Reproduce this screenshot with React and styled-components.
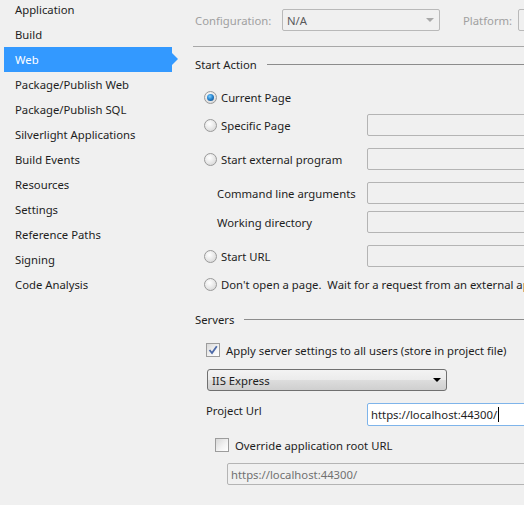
import React from "react";
import styled, { createGlobalStyle } from "styled-components";

const navItems = [
  "Application",
  "Build",
  "Web",
  "Package/Publish Web",
  "Package/Publish SQL",
  "Silverlight Applications",
  "Build Events",
  "Resources",
  "Settings",
  "Reference Paths",
  "Signing",
  "Code Analysis",
];

const GlobalStyle = createGlobalStyle`
  html, body {
    margin: 0;
    padding: 0;
    background: #f0f0f0;
    overflow: hidden;
  }
  body {
    font-family: "Noto Sans", "Open Sans", sans-serif;
    font-size: 11.3px;
    color: #1e1e1e;
  }
`;

const Page = styled.div`
  display: flex;
  width: 524px;
  height: 505px;
  overflow: hidden;
  background: #f0f0f0;
`;

const Sidebar = styled.ul`
  list-style: none;
  margin: -3px 0 0 0;
  padding: 0;
  width: 185px;
  flex-shrink: 0;
`;

const NavItem = styled.li`
  position: relative;
  height: 25px;
  line-height: 25px;
  margin-left: 4px;
  width: 168px;
  padding-left: 11px;
  box-sizing: border-box;
  white-space: nowrap;
  background: ${(p) => (p.$active ? "#3399ff" : "transparent")};
  color: ${(p) => (p.$active ? "#ffffff" : "#1e1e1e")};

  &::after {
    content: "";
    display: ${(p) => (p.$active ? "block" : "none")};
    position: absolute;
    right: -6px;
    top: 6px;
    border-top: 6px solid transparent;
    border-bottom: 6px solid transparent;
    border-left: 6px solid #3399ff;
  }
`;

const Content = styled.div`
  flex-shrink: 0;
  width: 420px;
  display: flex;
  flex-direction: column;
`;

const TopBar = styled.div`
  display: flex;
  align-items: center;
  height: 22px;
  margin-top: 9px;
  padding-left: 10px;
`;

const DimLabel = styled.span`
  color: #a0a0a0;
  width: ${(p) => p.$w}px;
  margin-left: ${(p) => p.$ml || 0}px;
  flex-shrink: 0;
`;

const Combo = styled.div`
  display: flex;
  align-items: center;
  justify-content: space-between;
  box-sizing: border-box;
  width: ${(p) => p.$w}px;
  height: 22px;
  border: 1px solid #b9b9b9;
  border-radius: 2px;
  padding: 0 5px 0 4px;
  color: #5a5a5a;
  flex-shrink: 0;
`;

const SmallArrow = styled.span`
  width: 0;
  height: 0;
  border-left: 4px solid transparent;
  border-right: 4px solid transparent;
  border-top: 4px solid ${(p) => p.$color || "#a8a8a8"};
`;

const Rule = styled.div`
  height: 1px;
  margin: 15px 0 0 8px;
  background: #a8a8a8;
`;

const SectionHead = styled.div`
  display: flex;
  align-items: center;
  height: 22px;
  margin-top: ${(p) => p.$mt}px;
  padding-left: 10px;

  &::after {
    content: "";
    flex: 1;
    height: 1px;
    margin-left: 10px;
    background: #8c8c8c;
  }
`;

const Row = styled.div`
  display: flex;
  align-items: ${(p) => p.$align || "center"};
  height: ${(p) => p.$h || 22}px;
  margin-top: ${(p) => p.$mt}px;
  padding-left: ${(p) => p.$pl}px;
  white-space: nowrap;
`;

const Label = styled.span`
  width: ${(p) => (p.$w ? `${p.$w}px` : "auto")};
  flex-shrink: 0;
  padding-top: ${(p) => p.$pt || 0}px;
`;

const RadioCircle = styled.span`
  width: 13px;
  height: 13px;
  box-sizing: border-box;
  border-radius: 50%;
  border: 1px solid #9a9a9a;
  background: radial-gradient(circle at 40% 35%, #ffffff 0%, #e6e6e6 55%, #cfcfcf 100%);
  display: flex;
  align-items: center;
  justify-content: center;
  margin-right: 4px;
  flex-shrink: 0;

  &::after {
    content: "";
    display: ${(p) => (p.$checked ? "block" : "none")};
    width: 7px;
    height: 7px;
    border-radius: 50%;
    background: radial-gradient(circle at 40% 35%, #7fd0ff 0%, #2a86d0 45%, #0d3f75 100%);
  }
`;

const Radio = ({ checked, children, w }) => (
  <>
    <RadioCircle $checked={checked} />
    <Label $w={w}>{children}</Label>
  </>
);

const Box = styled.span`
  display: inline-flex;
  width: 14px;
  height: 14px;
  box-sizing: border-box;
  border: 1px solid #9c9c9c;
  background: linear-gradient(135deg, #d8d8d8 0%, #f4f4f4 60%, #ffffff 100%);
  margin-right: 6px;
  flex-shrink: 0;
  align-items: center;
  justify-content: center;
`;

const Check = ({ checked, children }) => (
  <>
    <Box>
      {checked && (
        <svg width="10" height="10" viewBox="0 0 10 10">
          <path d="M1.5 5 L4 8 L8.8 1.2" fill="none" stroke="#4d6aa8" strokeWidth="1.8" />
        </svg>
      )}
    </Box>
    <Label>{children}</Label>
  </>
);

const Field = styled.div`
  box-sizing: border-box;
  width: ${(p) => p.$w || 180}px;
  height: ${(p) => p.$h || 22}px;
  flex-shrink: 0;
  display: flex;
  align-items: center;
  padding-left: 3px;
  border: 1px solid ${(p) => (p.$focus ? "#7eb4ea" : "#b4b4b4")};
  border-radius: 2px;
  background: ${(p) => (p.$focus ? "#ffffff" : "#f0f0f0")};
  color: ${(p) => (p.$muted ? "#707070" : "#1e1e1e")};
`;

const Caret = styled.span`
  width: 1px;
  height: 15px;
  background: #000;
  margin-left: 1px;
`;

const Dropdown = styled.div`
  box-sizing: border-box;
  width: 240px;
  height: 22px;
  display: flex;
  align-items: center;
  justify-content: space-between;
  padding: 0 5px 0 4px;
  border: 1px solid #707070;
  border-radius: 3px;
  background: linear-gradient(#f3f3f3 0%, #ebebeb 50%, #dddddd 51%, #cfcfcf 100%);
`;

export default function App() {
  return (
    <>
      <GlobalStyle />
      <Page>
        <Sidebar>
          {navItems.map((name) => (
            <NavItem key={name} $active={name === "Web"}>
              {name}
            </NavItem>
          ))}
        </Sidebar>
        <Content>
          <TopBar>
            <DimLabel $w={87}>Configuration:</DimLabel>
            <Combo $w={158}>
              N/A
              <SmallArrow />
            </Combo>
            <DimLabel $w={55} $ml={23}>Platform:</DimLabel>
            <Combo $w={60} />
          </TopBar>
          <Rule />

          <SectionHead $mt={6}>Start Action</SectionHead>

          <Row $mt={11} $pl={19}>
            <Radio checked w={146}>Current Page</Radio>
          </Row>
          <Row $mt={6} $pl={19}>
            <Radio w={146}>Specific Page</Radio>
            <Field />
          </Row>
          <Row $mt={12} $pl={19}>
            <Radio w={146}>Start external program</Radio>
            <Field />
          </Row>
          <Row $mt={12} $pl={32}>
            <Label $w={150}>Command line arguments</Label>
            <Field />
          </Row>
          <Row $mt={7} $pl={32}>
            <Label $w={150}>Working directory</Label>
            <Field />
          </Row>
          <Row $mt={12} $pl={19}>
            <Radio w={146}>Start URL</Radio>
            <Field />
          </Row>
          <Row $mt={6} $pl={19}>
            <Radio>Don't open a page.&nbsp; Wait for a request from an external application.</Radio>
          </Row>

          <SectionHead $mt={13}>Servers</SectionHead>

          <Row $mt={9} $pl={21}>
            <Check checked>Apply server settings to all users (store in project file)</Check>
          </Row>
          <Row $mt={8} $pl={22}>
            <Dropdown>
              IIS Express
              <SmallArrow $color="#000" />
            </Dropdown>
          </Row>
          <Row $mt={12} $pl={21} $h={23} $align="flex-start">
            <Label $w={161}>Project Url</Label>
            <Field $focus $h={23}>
              https://localhost:44300/
              <Caret />
            </Field>
          </Row>
          <Row $mt={8} $pl={30}>
            <Check>Override application root URL</Check>
          </Row>
          <Row $mt={7} $pl={42}>
            <Field $w={320} $muted>https://localhost:44300/</Field>
          </Row>
        </Content>
      </Page>
    </>
  );
}
